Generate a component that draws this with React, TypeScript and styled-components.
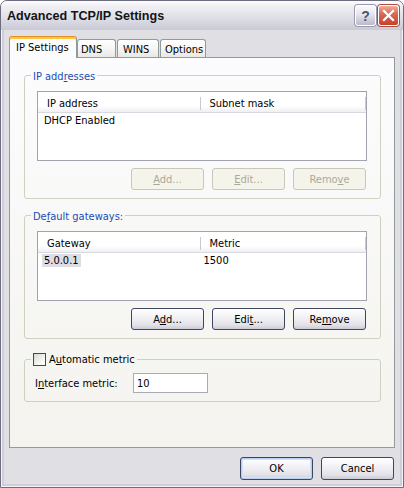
import React from 'react';
import styled, { createGlobalStyle, css } from 'styled-components';

const GlobalStyle = createGlobalStyle`
  html, body {
    margin: 0;
    padding: 0;
    background: #ffffff;
  }
  body {
    font-family: "DejaVu Sans Condensed", "Liberation Sans", sans-serif;
    font-size: 11px;
    line-height: 13px;
    color: #000000;
  }
  * {
    box-sizing: border-box;
  }
`;

const ipColumns = [162, 165];

const App: React.FC = () => {
  return (
    <>
      <GlobalStyle />
      <Window>
        <TitleBar>
          <TitleText>Advanced TCP/IP Settings</TitleText>
          <CaptionButton>
            <HelpGlyph>?</HelpGlyph>
          </CaptionButton>
          <CaptionButton $close>
            <svg width="19" height="19" viewBox="0 0 19 19">
              <path d="M5 5 L14 14 M14 5 L5 14" stroke="#ffffff" strokeWidth="2.2" strokeLinecap="square" />
            </svg>
          </CaptionButton>
        </TitleBar>

        <Body>
          <TabRow>
            <Tab $active $w={68} $pl={6}>IP Settings</Tab>
            <Tab $w={39} $pl={3}>DNS</Tab>
            <Tab $w={42} $pl={5} $ml={1}>WINS</Tab>
            <Tab $w={46} $pl={4} $ml={1}>Options</Tab>
          </TabRow>

          <Panel>
            <Group>
              <Legend>
                IP add<u>r</u>esses
              </Legend>
              <GroupBody>
                <ListView>
                  <ListHeader>
                    <HeaderCell $w={ipColumns[0]}>
                      <HeaderLabel>IP address</HeaderLabel>
                      <Divider />
                    </HeaderCell>
                    <HeaderCell $w={ipColumns[1]}>
                      <HeaderLabel>Subnet mask</HeaderLabel>
                      <Divider />
                    </HeaderCell>
                  </ListHeader>
                  <ListRow>
                    <Cell $w={ipColumns[0]} $pl={4}>
                      <CellText>DHCP Enabled</CellText>
                    </Cell>
                  </ListRow>
                </ListView>
                <ButtonRow>
                  <Button disabled>
                    <u>A</u>dd...
                  </Button>
                  <Button disabled>
                    <u>E</u>dit...
                  </Button>
                  <Button disabled>
                    Remo<u>v</u>e
                  </Button>
                </ButtonRow>
              </GroupBody>
            </Group>

            <Group $mt={8}>
              <Legend>
                De<u>f</u>ault gateways:
              </Legend>
              <GroupBody>
                <ListView>
                  <ListHeader>
                    <HeaderCell $w={ipColumns[0]}>
                      <HeaderLabel>Gateway</HeaderLabel>
                      <Divider />
                    </HeaderCell>
                    <HeaderCell $w={ipColumns[1]}>
                      <HeaderLabel>Metric</HeaderLabel>
                      <Divider />
                    </HeaderCell>
                  </ListHeader>
                  <ListRow>
                    <Cell $w={ipColumns[0]} $pl={4}>
                      <CellText $selected>5.0.0.1</CellText>
                    </Cell>
                    <Cell $w={ipColumns[1]} $pl={1}>
                      <CellText>1500</CellText>
                    </Cell>
                  </ListRow>
                </ListView>
                <ButtonRow>
                  <Button>
                    A<u>d</u>d...
                  </Button>
                  <Button>
                    Edi<u>t</u>...
                  </Button>
                  <Button>
                    Re<u>m</u>ove
                  </Button>
                </ButtonRow>
              </GroupBody>
            </Group>

            <Group $mt={14}>
              <CheckLegend>
                <CheckBox />
                <CheckLabel>
                  A<u>u</u>tomatic metric
                </CheckLabel>
              </CheckLegend>
              <MetricBody>
                <FieldLabel>
                  I<u>n</u>terface metric:
                </FieldLabel>
                <TextBox value="10" readOnly />
              </MetricBody>
            </Group>
          </Panel>

          <Footer>
            <Button $default $tall>OK</Button>
            <Button $tall>Cancel</Button>
          </Footer>
        </Body>
      </Window>
    </>
  );
};

const Window = styled.div`
  width: 404px;
  height: 488px;
  display: flex;
  flex-direction: column;
  background: #e0dfe3;
  border: 1px solid #6d6d82;
  border-radius: 7px 7px 0 0;
  overflow: hidden;
  box-shadow: inset 0 0 0 1px #f4f4f8, inset 0 0 0 3px #cfced8;
`;

const TitleBar = styled.div`
  flex: none;
  height: 29px;
  display: flex;
  align-items: center;
  gap: 2px;
  padding: 2px 4px 0 6px;
  background: linear-gradient(
    to bottom,
    #fdfdfe 0%,
    #f0f0f4 18%,
    #e0e0e8 55%,
    #cacad6 100%
  );
`;

const TitleText = styled.div`
  flex: 1;
  font-family: "Liberation Sans", "DejaVu Sans", sans-serif;
  font-weight: 700;
  font-size: 12.6px;
  line-height: 15px;
  color: #141414;
`;

const CaptionButton = styled.div<{ $close?: boolean }>`
  width: 21px;
  height: 21px;
  margin-top: -2px;
  display: flex;
  align-items: center;
  justify-content: center;
  border: 1px solid #ffffff;
  border-radius: 3px;
  background: linear-gradient(to bottom, #fbfbfd 0%, #e4e4ec 45%, #b9b9ca 100%);
  box-shadow: 0 0 0 1px #9a9aae;
  ${({ $close }) =>
    $close &&
    css`
      background: linear-gradient(to bottom, #f0ad9d 0%, #dc6b55 40%, #c5412c 100%);
      box-shadow: 0 0 0 1px #a7503f;
    `}
`;

const HelpGlyph = styled.span`
  font-family: "Liberation Sans", sans-serif;
  font-weight: 700;
  font-size: 14px;
  line-height: 14px;
  color: #4a5474;
`;

const Body = styled.div`
  flex: 1;
  display: flex;
  flex-direction: column;
  padding: 6px 8px 7px 8px;
  min-height: 0;
`;

const TabRow = styled.div`
  display: flex;
  align-items: flex-end;
  height: 22px;
  margin-bottom: -1px;
  position: relative;
  z-index: 1;
`;

const Tab = styled.div<{ $active?: boolean; $w: number; $pl: number; $ml?: number }>`
  width: ${({ $w }) => $w}px;
  height: 18px;
  margin-left: ${({ $ml }) => $ml || 0}px;
  margin-bottom: 1px;
  padding: 3px 0 0 ${({ $pl }) => $pl}px;
  border: 1px solid #919b9c;
  border-bottom: none;
  border-radius: 3px 3px 0 0;
  background: linear-gradient(to bottom, #ffffff 0%, #f6f6f4 50%, #e9e8e3 100%);
  white-space: nowrap;
  ${({ $active }) =>
    $active &&
    css`
      height: 22px;
      margin-bottom: 0;
      padding-top: 4px;
      border-top-color: #e68b2c;
      background: #fcfcfe;
      box-shadow: inset 0 2px 0 #ffc73c;
    `}
`;

const Panel = styled.div`
  flex: 1;
  display: flex;
  flex-direction: column;
  padding: 9px 13px 0 14px;
  border: 1px solid #919b9c;
  background: linear-gradient(to bottom, #fcfcfe 0%, #f4f3ee 100%);
`;

const Group = styled.fieldset<{ $mt?: number }>`
  margin: ${({ $mt }) => $mt || 0}px 0 0 0;
  padding: 0;
  min-width: 0;
  border: 1px solid #d0d0bf;
  border-radius: 3px;
`;

const Legend = styled.legend`
  margin-left: 6px;
  padding: 4px 2px 0 2px;
  line-height: 12px;
  color: #1c4bb4;
`;

const GroupBody = styled.div`
  padding: 8px 13px 8px 12px;
`;

const ListView = styled.div`
  height: 70px;
  border: 1px solid #a3a3ae;
  background: #ffffff;
  overflow: hidden;
`;

const ListHeader = styled.div`
  display: flex;
  height: 21px;
  padding-top: 3px;
  border-bottom: 1px solid #d8d8e0;
  background: linear-gradient(to bottom, #ffffff 70%, #f0f0f3 100%);
`;

const HeaderCell = styled.div<{ $w: number }>`
  width: ${({ $w }) => $w + 1}px;
  display: flex;
  align-items: center;
  padding-left: 9px;
`;

const HeaderLabel = styled.span`
  flex: 1;
`;

const Divider = styled.span`
  width: 1px;
  height: 13px;
  background: #c8c8d2;
`;

const ListRow = styled.div`
  display: flex;
  padding-top: 1px;
`;

const Cell = styled.div<{ $w: number; $pl: number }>`
  width: ${({ $w }) => $w + 1}px;
  padding-left: ${({ $pl }) => $pl}px;
`;

const CellText = styled.span<{ $selected?: boolean }>`
  display: inline-block;
  padding: 0 2px;
  background: ${({ $selected }) => ($selected ? '#dedde3' : 'transparent')};
`;

const ButtonRow = styled.div`
  display: flex;
  justify-content: flex-end;
  gap: 8px;
  margin-top: 7px;
  padding-right: 1px;
`;

const Button = styled.button<{ $default?: boolean; $tall?: boolean }>`
  width: 73px;
  height: ${({ $tall }) => ($tall ? 23 : 22)}px;
  padding: 0;
  font: inherit;
  color: #000000;
  border: 1px solid #3d4660;
  border-radius: 3px;
  background: linear-gradient(
    to bottom,
    #ffffff 0%,
    #f4f4f7 35%,
    #e2e2e9 80%,
    #cbcbd6 100%
  );
  ${({ $default }) =>
    $default &&
    css`
      box-shadow: inset 0 0 0 1px #b8cdef, inset 0 0 0 2px #d4e1f6;
    `}
  &:disabled {
    color: #aca899;
    border-color: #c9c7ba;
    background: #f5f4ea;
  }
`;

const CheckLegend = styled.legend`
  display: flex;
  align-items: center;
  height: 13px;
  margin-left: 6px;
  padding: 0 2px;
`;

const CheckBox = styled.span`
  width: 13px;
  height: 13px;
  border: 1px solid #2b4e78;
  background: linear-gradient(135deg, #d8d8d2 0%, #f4f4f0 60%, #ffffff 100%);
`;

const CheckLabel = styled.span`
  margin-left: 3px;
`;

const MetricBody = styled.div`
  display: flex;
  align-items: center;
  padding: 7px 10px 8px 10px;
`;

const FieldLabel = styled.span`
  width: 98px;
`;

const TextBox = styled.input`
  width: 75px;
  height: 20px;
  padding: 0 0 0 3px;
  font: inherit;
  color: #000000;
  border: 1px solid #a9acb6;
  background: #ffffff;
  outline: none;
`;

const Footer = styled.div`
  display: flex;
  justify-content: flex-end;
  gap: 8px;
  margin-top: 9px;
  padding-right: 1px;
`;

export default App;
